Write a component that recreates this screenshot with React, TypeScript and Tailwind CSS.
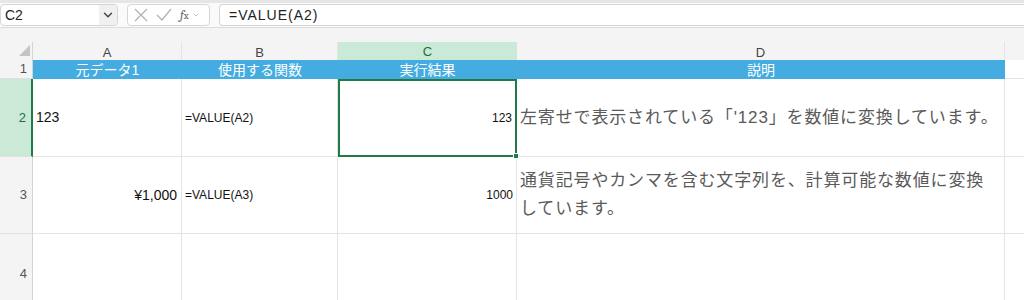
import { ChevronDown } from "lucide-react";

const jp = { fontFamily: '"Liberation Sans", "Noto Sans CJK JP", sans-serif' };

const cols = "grid grid-cols-[33px_149px_156px_179px_488px_1fr]";

const FormulaBar = () => (
  <div className="h-[28px] bg-[#fafafa] border-t-[3px] border-[#e6e6e6] border-b border-b-[#dcdcdc] flex items-center gap-[9px] pr-0">
    <div className="w-[118px] h-[22px] bg-white border border-[#d6d6d6] rounded-[4px] flex items-center justify-between pl-[4px] text-[14px] text-[#222]">
      <span>C2</span>
      <div className="w-[18px] h-full bg-[#f0f0f0] flex items-center justify-center rounded-r-[4px]">
        <ChevronDown className="w-[14px] h-[14px] text-[#444]" strokeWidth={2.5} />
      </div>
    </div>
    <div className="w-[83px] h-[22px] bg-white border border-[#d6d6d6] rounded-[4px] flex items-center pl-[6px] gap-[8px] text-[#b5b5b5]">
      <svg width="14" height="14" viewBox="0 0 14 14" fill="none" stroke="#b0b0b0" strokeWidth="1.2">
        <path d="M1 1 L13 13 M13 1 L1 13" />
      </svg>
      <svg width="16" height="14" viewBox="0 0 16 14" fill="none" stroke="#b0b0b0" strokeWidth="1.2">
        <path d="M1 7 L6 12 L15 1" />
      </svg>
      <span className="text-[13px] italic text-[#666] font-serif">
        f<span className="text-[10px] not-italic">x</span>
      </span>
      <ChevronDown className="w-[8px] h-[8px] text-[#aaa] -ml-[5px]" />
    </div>
    <div className="flex-1 h-[22px] bg-white border border-[#d6d6d6] rounded-l-[4px] border-r-0 flex items-center pl-[9px] text-[14px] tracking-[1px] text-[#222]">
      =VALUE(A2)
    </div>
  </div>
);

const ColHeaders = () => (
  <div className="h-[32px] bg-[#f4f4f4] flex flex-col">
    <div className="h-[14px]" />
    <div className={`${cols} h-[18px] text-[13px] text-[#444]`}>
      <div className="relative border-r border-[#d4d4d4]">
        <svg className="absolute left-[19px] top-[3px]" width="11" height="11" viewBox="0 0 11 11">
          <path d="M11 0 L11 11 L0 11 Z" fill="#c4c4c4" />
        </svg>
      </div>
      <div className="flex items-center justify-center border-r border-[#e4e4e4]">A</div>
      <div className="flex items-center justify-center border-r border-[#e4e4e4]">B</div>
      <div className="flex items-center justify-center bg-[#cae9d6] text-[#1e6e3e] border-b-2 border-[#1e7b45]">C</div>
      <div className="flex items-center justify-center border-r border-[#e4e4e4]">D</div>
      <div />
    </div>
  </div>
);

const RowNum = ({ n, active, h }: { n: number; active?: boolean; h: string }) => (
  <div
    className={`${h} flex items-center justify-end pr-[5px] text-[13px] border-b border-[#e0e0e0] ${
      active
        ? "bg-[#cae9d6] text-[#1e6e3e] border-r-2 border-r-[#1e7b45]"
        : "bg-[#f4f4f4] text-[#555] border-r border-r-[#d4d4d4]"
    }`}
  >
    {n}
  </div>
);

export default function App() {
  return (
    <div className="w-[1024px] h-[300px] overflow-hidden bg-white" style={jp}>
      <FormulaBar />
      <ColHeaders />

      {/* row 1 */}
      <div className={`${cols} h-[19px]`}>
        <RowNum n={1} h="h-[19px]" />
        {["元データ1", "使用する関数", "実行結果", "説明"].map((t) => (
          <div key={t} className="bg-[#44ace1] text-white text-[14px] flex items-center justify-center leading-none">
            {t}
          </div>
        ))}
        <div className="border-b border-[#e4e4e4]" />
      </div>

      {/* row 2 */}
      <div className={`${cols} h-[78px]`}>
        <RowNum n={2} active h="h-[78px]" />
        <div className="flex items-center pl-[3px] text-[14px] text-[#111] border-r border-b border-[#e4e4e4]">123</div>
        <div className="flex items-center pl-[3px] text-[12px] text-[#111] border-r border-b border-[#e4e4e4]">=VALUE(A2)</div>
        <div className="relative flex items-center justify-end pr-[3px] text-[12px] text-[#111] border-2 border-[#1e7b45]">
          123
          <div className="absolute -right-[4px] -bottom-[4px] w-[6px] h-[6px] bg-[#1e7b45] border border-white" />
        </div>
        <div className="flex items-center pl-[3px] text-[17px] text-[#5a5a5a] border-r border-b border-[#e4e4e4] tracking-[0.85px]">
          左寄せで表示されている「'123」を数値に変換しています。
        </div>
        <div className="border-b border-[#e4e4e4]" />
      </div>

      {/* row 3 */}
      <div className={`${cols} h-[77px]`}>
        <RowNum n={3} h="h-[77px]" />
        <div className="flex items-center justify-end pr-[4px] text-[14px] text-[#111] border-r border-b border-[#e4e4e4]">¥1,000</div>
        <div className="flex items-center pl-[3px] text-[12px] text-[#111] border-r border-b border-[#e4e4e4]">=VALUE(A3)</div>
        <div className="flex items-center justify-end pr-[3px] text-[12px] text-[#111] border-r border-b border-[#e4e4e4]">1000</div>
        <div className="flex items-center pl-[3px] pr-[10px] text-[17px] leading-[28px] text-[#5a5a5a] border-r border-b border-[#e4e4e4] tracking-[0.85px]">
          通貨記号やカンマを含む文字列を、計算可能な数値に変換しています。
        </div>
        <div className="border-b border-[#e4e4e4]" />
      </div>

      {/* row 4 */}
      <div className={`${cols} h-[80px]`}>
        <div className="h-[80px] flex items-center justify-end pr-[5px] text-[13px] bg-[#f4f4f4] text-[#555] border-r border-[#d4d4d4]">4</div>
        <div className="border-r border-[#e4e4e4]" />
        <div className="border-r border-[#e4e4e4]" />
        <div className="border-r border-[#e4e4e4]" />
        <div className="border-r border-[#e4e4e4]" />
        <div />
      </div>
    </div>
  );
}
